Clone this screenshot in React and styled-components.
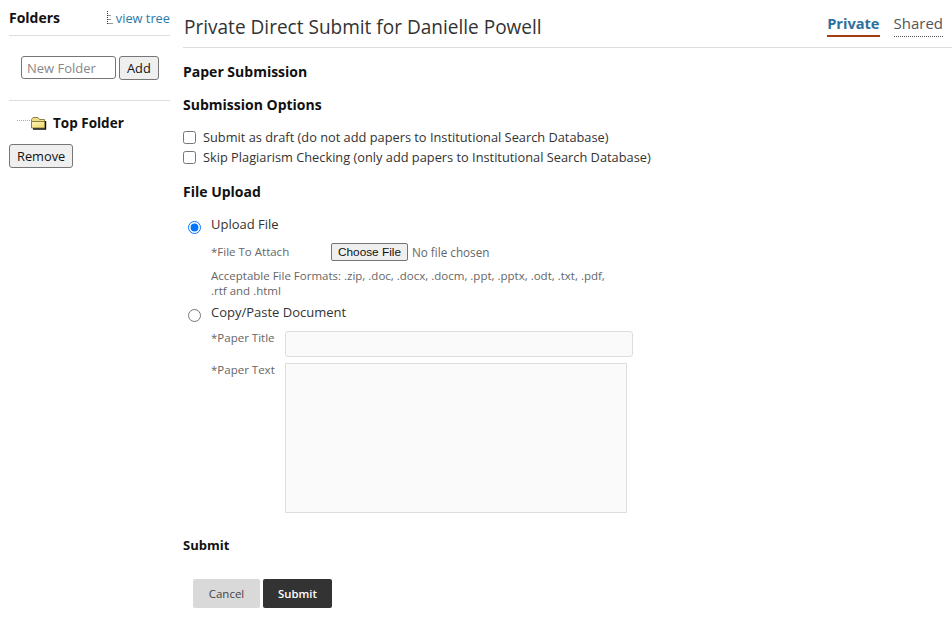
import React from "react";
import styled, { createGlobalStyle } from "styled-components";

const GlobalStyle = createGlobalStyle`
    html, body { margin: 0; padding: 0; background: #fff; }
    body {
        font-family: "Open Sans", "Noto Sans", sans-serif;
        font-size: 13px;
        color: #333;
    }
    * { box-sizing: border-box; }
`;

const Page = styled.div`
    display: flex;
    width: 952px;
    height: 625px;
    overflow: hidden;
`;

const Sidebar = styled.aside`
    width: 170px;
    padding: 0 0 0 9px;
    flex-shrink: 0;
`;

const SideHead = styled.div`
    display: flex;
    justify-content: space-between;
    align-items: center;
    height: 36px;
    border-bottom: 1px solid #ddd;
`;

const SideTitle = styled.h3`
    margin: 0;
    font-size: 14px;
    font-weight: 700;
    color: #111;
`;

const TreeLink = styled.a`
    display: flex;
    align-items: center;
    gap: 2px;
    font-size: 12.8px;
    color: #2d77a8;
`;

const AddRow = styled.div`
    display: flex;
    gap: 3px;
    height: 65px;
    padding: 20px 0 0 12px;
    border-bottom: 1px solid #ddd;
`;

const FolderInput = styled.input`
    width: 95px;
    height: 23px;
    padding: 0 5px;
    border: 1px solid #767676;
    border-radius: 3px;
    font: 13px "Open Sans", sans-serif;
    &::placeholder { color: #888; }
`;

const PlainButton = styled.button`
    height: 24px;
    padding: 0 7px;
    border: 1px solid #767676;
    border-radius: 3px;
    background: #efefef;
    font: 12.8px "Open Sans", sans-serif;
    color: #111;
`;

const TreeRow = styled.div`
    display: flex;
    align-items: center;
    height: 22px;
    margin-top: 11px;
    padding-left: 8px;
    gap: 6px;
    font-size: 13.5px;
    line-height: 23px;
    font-weight: 700;
    color: #111;
`;

const RemoveWrap = styled.div`
    margin-top: 10px;
`;

const Main = styled.main`
    flex: 1;
    padding-left: 13px;
`;

const TopBar = styled.header`
    display: flex;
    justify-content: space-between;
    height: 48px;
    border-bottom: 1px solid #ddd;
`;

const PageTitle = styled.h1`
    margin: 14px 0 0 1px;
    font-size: 19.05px;
    font-weight: 400;
    line-height: 26px;
    color: #333;
`;

const Tabs = styled.div`
    display: flex;
    gap: 14px;
    padding: 13px 9px 0 0;
`;

const Tab = styled.span`
    height: 24px;
    font-size: ${(p) => (p.$active ? 14.6 : 15)}px;
    line-height: 20px;
    font-weight: ${(p) => (p.$active ? 700 : 400)};
    color: ${(p) => (p.$active ? "#2d6f9f" : "#555")};
    border-bottom: ${(p) => (p.$active ? "2px solid #a33e14" : "1px dotted #555")};
`;

const Heading = styled.h2`
    margin: ${(p) => p.$top || 0}px 0 0;
    font-size: ${(p) => p.$size || 14}px;
    line-height: 19px;
    font-weight: 700;
    color: #111;
`;

const Options = styled.div`
    margin-top: 13px;
`;

const CheckRow = styled.label`
    display: flex;
    align-items: center;
    height: 20px;
    gap: 7px;
    font-size: 12.8px;
    color: #333;
    input { width: 13px; height: 13px; margin: 1px 0 0; }
`;

const RadioRow = styled.label`
    display: flex;
    align-items: flex-start;
    height: 20px;
    margin-top: ${(p) => p.$top || 0}px;
    padding-left: 5px;
    gap: 10px;
    line-height: 20px;
    color: #333;
    input { width: 13px; height: 13px; margin: 7px 0 0; }
`;

const FieldArea = styled.div`
    padding-left: 28px;
    font-size: 11.5px;
    color: #666;
`;

const AttachRow = styled.div`
    display: flex;
    align-items: center;
    margin-top: 7px;
    height: 22px;
`;

const AttachLabel = styled.span`
    width: 120px;
    margin-top: -2px;
`;

const ChooseButton = styled.span`
    display: inline-flex;
    align-items: center;
    justify-content: center;
    width: 77px;
    height: 18px;
    border: 1px solid #767676;
    border-radius: 2px;
    background: #efefef;
    font: 11.8px "Liberation Sans", Arial, sans-serif;
    color: #111;
`;

const NoFile = styled.span`
    margin-left: 4px;
    font-size: 11.7px;
`;

const Formats = styled.p`
    margin: 5px 0 0;
    width: 410px;
    line-height: 15px;
`;

const PasteRow = styled.div`
    display: flex;
    margin-top: ${(p) => p.$top}px;
`;

const PasteLabel = styled.span`
    width: 74px;
    flex-shrink: 0;
    font-size: 11.5px;
    line-height: 14px;
`;

const TitleField = styled.input`
    width: 348px;
    height: 26px;
    background: #fafafa;
    border: 1px solid #ddd;
    border-radius: 3px;
`;

const TextField = styled.textarea`
    display: block;
    width: 342px;
    height: 150px;
    background: #fafafa;
    border: 1px solid #ddd;
    resize: none;
`;

const Actions = styled.div`
    display: flex;
    gap: 3px;
    margin: 24px 0 0 10px;
`;

const ActionButton = styled.button`
    width: ${(p) => p.$width}px;
    height: 29px;
    border: 0;
    border-radius: 2px;
    background: ${(p) => (p.$dark ? "#333" : "#d9d9d9")};
    color: ${(p) => (p.$dark ? "#fff" : "#444")};
    font: ${(p) => (p.$dark ? "600 11.3px" : "400 11.5px")} "Open Sans", sans-serif;
`;

const TreeIcon = () => (
    <svg width="8" height="13" viewBox="0 0 8 13">
        <path d="M1.5 0v13M1.5 4.5h3M1.5 8.5h3M1.5 12.5h6" stroke="#333" strokeDasharray="1 1" fill="none" />
    </svg>
);

const FolderIcon = () => (
    <svg width="30" height="14" viewBox="0 0 30 14">
        <defs>
            <linearGradient id="folderFill" x1="0" y1="0" x2="1" y2="1">
                <stop offset="0" stopColor="#fdf6c0" />
                <stop offset="1" stopColor="#f2d65c" />
            </linearGradient>
        </defs>
        <path d="M0 4.5h13" stroke="#aaa" strokeDasharray="1 1" fill="none" />
        <path d="M14.5 3.5l1.5-2h5l1.5 2h5v2h-13z" fill="#f0dc84" stroke="#8a8242" />
        <path d="M14.5 5.5h13.5v6.5h-13.5z" fill="url(#folderFill)" stroke="#8a8242" />
        <path d="M28.5 5v8H16" stroke="#111" strokeWidth="1.4" fill="none" />
    </svg>
);

const App = () => (
    <Page>
        <GlobalStyle />
        <Sidebar>
            <SideHead>
                <SideTitle>Folders</SideTitle>
                <TreeLink><TreeIcon />view tree</TreeLink>
            </SideHead>
            <AddRow>
                <FolderInput placeholder="New Folder" />
                <PlainButton>Add</PlainButton>
            </AddRow>
            <TreeRow><FolderIcon />Top Folder</TreeRow>
            <RemoveWrap><PlainButton>Remove</PlainButton></RemoveWrap>
        </Sidebar>
        <Main>
            <TopBar>
                <PageTitle>Private Direct Submit for Danielle Powell</PageTitle>
                <Tabs>
                    <Tab $active>Private</Tab>
                    <Tab>Shared</Tab>
                </Tabs>
            </TopBar>
            <Heading $top={14}>Paper Submission</Heading>
            <Heading $top={14}>Submission Options</Heading>
            <Options>
                <CheckRow><input type="checkbox" />Submit as draft (do not add papers to Institutional Search Database)</CheckRow>
                <CheckRow><input type="checkbox" />Skip Plagiarism Checking (only add papers to Institutional Search Database)</CheckRow>
            </Options>
            <Heading $top={15}>File Upload</Heading>
            <RadioRow $top={13}><input type="radio" name="mode" defaultChecked />Upload File</RadioRow>
            <FieldArea>
                <AttachRow>
                    <AttachLabel>*File To Attach</AttachLabel>
                    <ChooseButton>Choose File</ChooseButton>
                    <NoFile>No file chosen</NoFile>
                </AttachRow>
                <Formats>Acceptable File Formats: .zip, .doc, .docx, .docm, .ppt, .pptx, .odt, .txt, .pdf, .rtf and .html</Formats>
            </FieldArea>
            <RadioRow $top={4}><input type="radio" name="mode" />Copy/Paste Document</RadioRow>
            <FieldArea>
                <PasteRow $top={9}><PasteLabel>*Paper Title</PasteLabel><TitleField /></PasteRow>
                <PasteRow $top={6}><PasteLabel>*Paper Text</PasteLabel><TextField /></PasteRow>
            </FieldArea>
            <Heading $top={23} $size={13}>Submit</Heading>
            <Actions>
                <ActionButton $width={67}>Cancel</ActionButton>
                <ActionButton $width={69} $dark>Submit</ActionButton>
            </Actions>
        </Main>
    </Page>
);

export default App;
